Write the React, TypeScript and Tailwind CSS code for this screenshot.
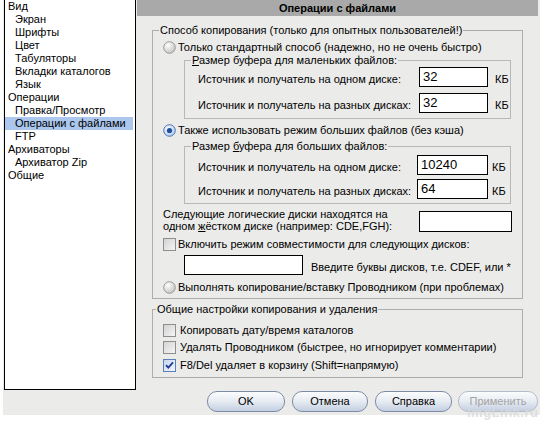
import React from 'react'

const tree: [string, number, boolean?][] = [
  ['Вид', 0],
  ['Экран', 1],
  ['Шрифты', 1],
  ['Цвет', 1],
  ['Табуляторы', 1],
  ['Вкладки каталогов', 1],
  ['Язык', 1],
  ['Операции', 0],
  ['Правка/Просмотр', 1],
  ['Операции с файлами', 1, true],
  ['FTP', 1],
  ['Архиваторы', 0],
  ['Архиватор Zip', 1],
  ['Общие', 0],
]

const Radio = ({ checked }: { checked?: boolean }) => (
  <svg width="13" height="13" viewBox="0 0 13 13" className="shrink-0">
    <defs>
      <radialGradient id="radOff" cx="35%" cy="30%" r="75%">
        <stop offset="0" stopColor="#ffffff" />
        <stop offset="1" stopColor="#c4c4c4" />
      </radialGradient>
      <radialGradient id="radOn" cx="40%" cy="35%" r="70%">
        <stop offset="0" stopColor="#ffffff" />
        <stop offset="1" stopColor="#a9c4ea" />
      </radialGradient>
    </defs>
    <circle cx="6.5" cy="6.5" r="5.8" fill={checked ? 'url(#radOn)' : 'url(#radOff)'} stroke={checked ? '#4f77b8' : '#9a9a9a'} strokeWidth="1" />
    {checked && <circle cx="6.5" cy="6.5" r="2.6" fill="#1d4f9e" />}
  </svg>
)

const Check = ({ checked }: { checked?: boolean }) => (
  <svg width="13" height="13" viewBox="0 0 13 13" className="shrink-0">
    <defs>
      <linearGradient id="chkOff" x1="0" y1="0" x2="1" y2="1">
        <stop offset="0" stopColor="#d2d2d2" />
        <stop offset="1" stopColor="#f6f6f6" />
      </linearGradient>
      <linearGradient id="chkOn" x1="0" y1="0" x2="1" y2="1">
        <stop offset="0" stopColor="#c6d6ef" />
        <stop offset="1" stopColor="#f4f7fc" />
      </linearGradient>
    </defs>
    <rect x="0.5" y="0.5" width="12" height="12" fill={checked ? 'url(#chkOn)' : 'url(#chkOff)'} stroke={checked ? '#5b7fb9' : '#8e8e8e'} />
    {checked && <path d="M3 6.2 L5.3 8.7 L10 3.4" fill="none" stroke="#1f3f95" strokeWidth="1.9" />}
  </svg>
)

const Input = ({ w, h, value }: { w: string; h: string; value?: string }) => (
  <div className={w + ' ' + h + ' shrink-0 border border-black bg-white pl-[3px] text-[13px] leading-[17px]'}>{value}</div>
)

const Button = ({ label, w, disabled }: { label: string; w: string; disabled?: boolean }) => (
  <div
    className={
      w +
      ' h-[21px] rounded-[10px] border flex items-center justify-center bg-linear-to-b from-[#fbfcfd] via-[#e6ebf2] to-[#c3cfe0] ' +
      (disabled ? 'border-[#b4bcc9] text-[#a3a3a3]' : 'border-[#7d8ca6] text-black')
    }
  >
    {label}
  </div>
)

export default function App() {
  return (
    <div className="relative w-[543px] h-[421px] overflow-hidden bg-white text-[11px] leading-[13px] text-black font-['Liberation_Sans',Arial,sans-serif]">
      <div className="ml-[3px] w-[537px] h-[415px] bg-[#ebebe9] flex">
        {/* tree */}
        <div className="ml-[1px] w-[132px] h-[390px] shrink-0 bg-white border-x border-b border-black">
          {tree.map(([name, level, active], i) => (
            <div
              key={i}
              className={
                'h-[13px] whitespace-nowrap ' +
                (level ? 'pl-[10px] ' : 'pl-[3px] ') +
                (active ? 'mr-[2px] bg-[#abc7ee]' : '')
              }
            >
              {name}
            </div>
          ))}
        </div>

        {/* page */}
        <div className="ml-[1px] w-[401px] flex flex-col">
          <div className="h-[16px] bg-[#a9a9a9] flex items-center justify-center font-bold">Операции с файлами</div>

          <fieldset className="mt-[8px] ml-[15px] w-[371px] border border-[#adadad] pb-[4px]">
            <legend className="ml-[6px] px-px">Способ копирования (только для опытных пользователей!)</legend>

            <div className="mt-[4px] pl-[10px] flex items-center gap-[2px] h-[13px]">
              <Radio />
              <span>Только стандартный способ (надежно, но не очень быстро)</span>
            </div>

            <fieldset className="ml-[31px] w-[327px] border border-[#b8b8b8] pb-[5px]">
              <legend className="ml-[6px] px-px">
                <span className="underline">Р</span>азмер буфера для маленьких файлов:
              </legend>
              <div className="flex items-start pl-[13px]">
                <span className="w-[221px] mt-[6px]">Источник и получатель на одном диске:</span>
                <Input w="w-[69px]" h="h-[20px]" value="32" />
                <span className="ml-[7px] mt-[6px]">КБ</span>
              </div>
              <div className="mt-[6px] flex items-start pl-[13px]">
                <span className="w-[221px] mt-[6px]">Источник и получатель на разных дисках:</span>
                <Input w="w-[69px]" h="h-[20px]" value="32" />
                <span className="ml-[7px] mt-[6px]">КБ</span>
              </div>
            </fieldset>

            <div className="mt-[5px] pl-[10px] flex items-center gap-[2px] h-[13px]">
              <Radio checked />
              <span>Также использовать режим больших файлов (без кэша)</span>
            </div>

            <fieldset className="mt-[3px] ml-[31px] w-[327px] border border-[#b8b8b8] pb-[4px]">
              <legend className="ml-[6px] px-px">
                Размер <span className="underline">б</span>уфера для больших файлов:
              </legend>
              <div className="mt-[2px] flex items-start pl-[13px]">
                <span className="w-[219px] mt-[6px]">Источник и получатель на одном диске:</span>
                <Input w="w-[71px]" h="h-[20px]" value="10240" />
                <span className="ml-[4px] mt-[6px]">КБ</span>
              </div>
              <div className="mt-[4px] flex items-start pl-[13px]">
                <span className="w-[219px] mt-[6px]">Источник и получатель на разных дисках:</span>
                <Input w="w-[71px]" h="h-[20px]" value="64" />
                <span className="ml-[4px] mt-[6px]">КБ</span>
              </div>
            </fieldset>

            <div className="mt-[4px] pl-[10px] flex items-start">
              <div className="w-[256px] leading-[12px]">
                Следующие логические диски находятся на
                <br />
                одном <span className="underline">ж</span>ёстком диске (например: CDE,FGH):
              </div>
              <div className="mt-[3px]">
                <Input w="w-[93px]" h="h-[21px]" />
              </div>
            </div>

            <div className="mt-[6px] pl-[10px] flex items-center gap-[2px] h-[13px]">
              <Check />
              <span>Включить режим совместимости для следующих дисков:</span>
            </div>

            <div className="mt-[4px] pl-[31px] flex items-start">
              <Input w="w-[119px]" h="h-[20px]" />
              <span className="ml-[8px] mt-[6px]">Введите буквы дисков, т.е. CDEF, или *</span>
            </div>

            <div className="mt-[6px] pl-[10px] flex items-center gap-[2px] h-[13px]">
              <Radio />
              <span>Выполнять копирование/вставку Проводником (при проблемах)</span>
            </div>
          </fieldset>

          <fieldset className="mt-[4px] ml-[15px] w-[371px] border border-[#adadad] pb-[5px]">
            <legend className="ml-[3px] px-px">Общие настройки копирования и удаления</legend>
            <div className="mt-[8px] pl-[10px] flex items-center gap-[4px] h-[13px]">
              <Check />
              <span>Копировать дату/время каталогов</span>
            </div>
            <div className="mt-[4px] pl-[10px] flex items-center gap-[4px] h-[13px]">
              <Check />
              <span>Удалять Проводником (быстрее, но игнорирует комментарии)</span>
            </div>
            <div className="mt-[5px] pl-[10px] flex items-center gap-[4px] h-[13px]">
              <Check checked />
              <span>F8/Del удаляет в корзину (Shift=напрямую)</span>
            </div>
          </fieldset>

          <div className="mt-[13px] ml-[70px] flex">
            <Button label="OK" w="w-[78px]" />
            <div className="w-[7px]" />
            <Button label="Отмена" w="w-[76px]" />
            <div className="w-[7px]" />
            <Button label="Справка" w="w-[77px]" />
            <div className="w-[6px]" />
            <Button label="Применить" w="w-[80px]" disabled />
          </div>
        </div>
      </div>

      {/* watermark */}
      <div className="absolute left-[467px] top-[406px] text-[13px] font-bold tracking-[0.5px] text-[#d9dadc] opacity-80">ImgLink.ru</div>
    </div>
  )
}
